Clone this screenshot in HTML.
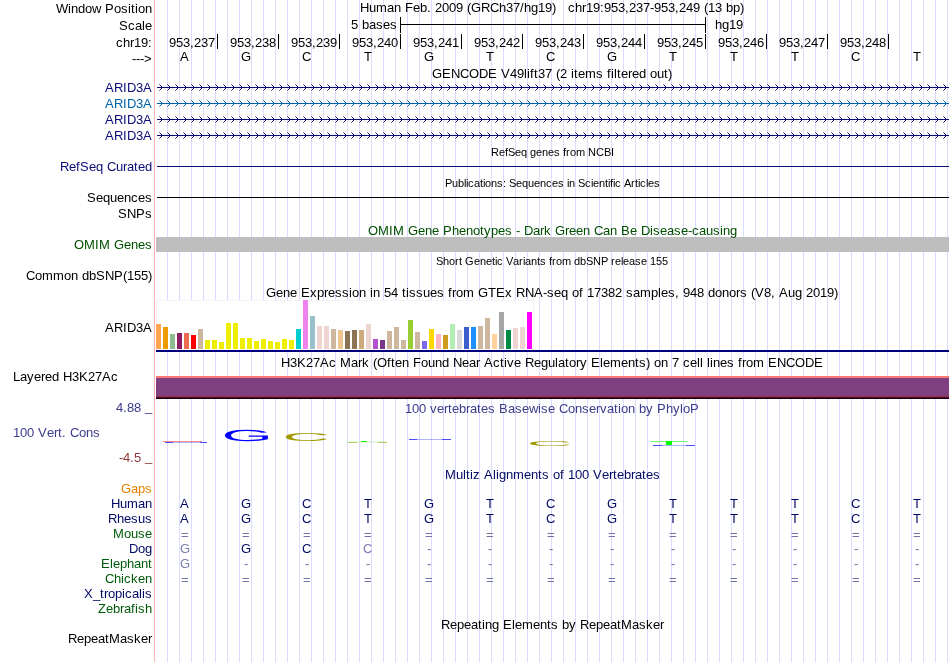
<!DOCTYPE html>
<html><head><meta charset="utf-8"><title>UCSC Genome Browser</title>
<style>html,body{margin:0;padding:0;background:#fff}svg text{white-space:pre}</style></head>
<body>
<svg width="950" height="662" viewBox="0 0 950 662" font-family="Liberation Sans, sans-serif" font-size="13" style="display:block;will-change:transform">
<defs>
<pattern id="cv1" x="0" y="0" width="8" height="7" patternUnits="userSpaceOnUse">
<rect x="7" y="0" width="1" height="1" fill="#0c0c78" opacity="0.55"/>
<rect x="0" y="1" width="1" height="1" fill="#0c0c78"/>
<rect x="1" y="2" width="1" height="1" fill="#0c0c78"/>
<rect x="2" y="3" width="1" height="1" fill="#0c0c78"/>
<rect x="1" y="4" width="1" height="1" fill="#0c0c78"/>
<rect x="0" y="5" width="1" height="1" fill="#0c0c78"/>
<rect x="7" y="6" width="1" height="1" fill="#0c0c78" opacity="0.55"/>
</pattern>
<pattern id="cv2" x="0" y="0" width="8" height="7" patternUnits="userSpaceOnUse">
<rect x="7" y="0" width="1" height="1" fill="#0064aa" opacity="0.55"/>
<rect x="0" y="1" width="1" height="1" fill="#0064aa"/>
<rect x="1" y="2" width="1" height="1" fill="#0064aa"/>
<rect x="2" y="3" width="1" height="1" fill="#0064aa"/>
<rect x="1" y="4" width="1" height="1" fill="#0064aa"/>
<rect x="0" y="5" width="1" height="1" fill="#0064aa"/>
<rect x="7" y="6" width="1" height="1" fill="#0064aa" opacity="0.55"/>
</pattern>
</defs>
<g shape-rendering="crispEdges">
<rect x="0" y="0" width="950" height="662" fill="#fff"/>
<rect x="167" y="0" width="1" height="662" fill="#dcdcff"/>
<rect x="179" y="0" width="1" height="662" fill="#dcdcff"/>
<rect x="191" y="0" width="1" height="662" fill="#dcdcff"/>
<rect x="203" y="0" width="1" height="662" fill="#dcdcff"/>
<rect x="215" y="0" width="1" height="662" fill="#dcdcff"/>
<rect x="227" y="0" width="1" height="662" fill="#dcdcff"/>
<rect x="239" y="0" width="1" height="662" fill="#dcdcff"/>
<rect x="251" y="0" width="1" height="662" fill="#dcdcff"/>
<rect x="263" y="0" width="1" height="662" fill="#dcdcff"/>
<rect x="275" y="0" width="1" height="662" fill="#dcdcff"/>
<rect x="287" y="0" width="1" height="662" fill="#dcdcff"/>
<rect x="299" y="0" width="1" height="662" fill="#dcdcff"/>
<rect x="311" y="0" width="1" height="662" fill="#dcdcff"/>
<rect x="323" y="0" width="1" height="662" fill="#dcdcff"/>
<rect x="335" y="0" width="1" height="662" fill="#dcdcff"/>
<rect x="347" y="0" width="1" height="662" fill="#dcdcff"/>
<rect x="359" y="0" width="1" height="662" fill="#dcdcff"/>
<rect x="371" y="0" width="1" height="662" fill="#dcdcff"/>
<rect x="383" y="0" width="1" height="662" fill="#dcdcff"/>
<rect x="395" y="0" width="1" height="662" fill="#dcdcff"/>
<rect x="407" y="0" width="1" height="662" fill="#dcdcff"/>
<rect x="419" y="0" width="1" height="662" fill="#dcdcff"/>
<rect x="431" y="0" width="1" height="662" fill="#dcdcff"/>
<rect x="443" y="0" width="1" height="662" fill="#dcdcff"/>
<rect x="455" y="0" width="1" height="662" fill="#dcdcff"/>
<rect x="467" y="0" width="1" height="662" fill="#dcdcff"/>
<rect x="479" y="0" width="1" height="662" fill="#dcdcff"/>
<rect x="491" y="0" width="1" height="662" fill="#dcdcff"/>
<rect x="503" y="0" width="1" height="662" fill="#dcdcff"/>
<rect x="515" y="0" width="1" height="662" fill="#dcdcff"/>
<rect x="527" y="0" width="1" height="662" fill="#dcdcff"/>
<rect x="539" y="0" width="1" height="662" fill="#dcdcff"/>
<rect x="551" y="0" width="1" height="662" fill="#dcdcff"/>
<rect x="563" y="0" width="1" height="662" fill="#dcdcff"/>
<rect x="575" y="0" width="1" height="662" fill="#dcdcff"/>
<rect x="587" y="0" width="1" height="662" fill="#dcdcff"/>
<rect x="599" y="0" width="1" height="662" fill="#dcdcff"/>
<rect x="611" y="0" width="1" height="662" fill="#dcdcff"/>
<rect x="623" y="0" width="1" height="662" fill="#dcdcff"/>
<rect x="635" y="0" width="1" height="662" fill="#dcdcff"/>
<rect x="647" y="0" width="1" height="662" fill="#dcdcff"/>
<rect x="659" y="0" width="1" height="662" fill="#dcdcff"/>
<rect x="671" y="0" width="1" height="662" fill="#dcdcff"/>
<rect x="683" y="0" width="1" height="662" fill="#dcdcff"/>
<rect x="695" y="0" width="1" height="662" fill="#dcdcff"/>
<rect x="707" y="0" width="1" height="662" fill="#dcdcff"/>
<rect x="719" y="0" width="1" height="662" fill="#dcdcff"/>
<rect x="731" y="0" width="1" height="662" fill="#dcdcff"/>
<rect x="743" y="0" width="1" height="662" fill="#dcdcff"/>
<rect x="755" y="0" width="1" height="662" fill="#dcdcff"/>
<rect x="767" y="0" width="1" height="662" fill="#dcdcff"/>
<rect x="779" y="0" width="1" height="662" fill="#dcdcff"/>
<rect x="791" y="0" width="1" height="662" fill="#dcdcff"/>
<rect x="803" y="0" width="1" height="662" fill="#dcdcff"/>
<rect x="815" y="0" width="1" height="662" fill="#dcdcff"/>
<rect x="827" y="0" width="1" height="662" fill="#dcdcff"/>
<rect x="839" y="0" width="1" height="662" fill="#dcdcff"/>
<rect x="851" y="0" width="1" height="662" fill="#dcdcff"/>
<rect x="863" y="0" width="1" height="662" fill="#dcdcff"/>
<rect x="875" y="0" width="1" height="662" fill="#dcdcff"/>
<rect x="887" y="0" width="1" height="662" fill="#dcdcff"/>
<rect x="899" y="0" width="1" height="662" fill="#dcdcff"/>
<rect x="911" y="0" width="1" height="662" fill="#dcdcff"/>
<rect x="923" y="0" width="1" height="662" fill="#dcdcff"/>
<rect x="935" y="0" width="1" height="662" fill="#dcdcff"/>
<rect x="947" y="0" width="1" height="662" fill="#dcdcff"/>
<rect x="154" y="0" width="1" height="662" fill="#ffb4b4"/>
<rect x="400" y="24" width="306" height="1" fill="#000"/>
<rect x="400" y="17" width="1" height="16" fill="#000"/>
<rect x="705" y="17" width="1" height="16" fill="#000"/>
<rect x="217" y="34" width="1" height="15" fill="#000"/>
<rect x="278" y="34" width="1" height="15" fill="#000"/>
<rect x="339" y="34" width="1" height="15" fill="#000"/>
<rect x="400" y="34" width="1" height="15" fill="#000"/>
<rect x="461" y="34" width="1" height="15" fill="#000"/>
<rect x="522" y="34" width="1" height="15" fill="#000"/>
<rect x="583" y="34" width="1" height="15" fill="#000"/>
<rect x="644" y="34" width="1" height="15" fill="#000"/>
<rect x="705" y="34" width="1" height="15" fill="#000"/>
<rect x="766" y="34" width="1" height="15" fill="#000"/>
<rect x="827" y="34" width="1" height="15" fill="#000"/>
<rect x="888" y="34" width="1" height="15" fill="#000"/>
<rect x="157" y="87" width="792" height="1" fill="#0c0c78"/>
<g transform="translate(0,84)"><rect x="159" y="0" width="788" height="7" fill="url(#cv1)"/></g>
<rect x="157" y="103" width="792" height="1" fill="#0064aa"/>
<g transform="translate(0,100)"><rect x="159" y="0" width="788" height="7" fill="url(#cv2)"/></g>
<rect x="157" y="119" width="792" height="1" fill="#0c0c78"/>
<g transform="translate(0,116)"><rect x="159" y="0" width="788" height="7" fill="url(#cv1)"/></g>
<rect x="157" y="135" width="792" height="1" fill="#0c0c78"/>
<g transform="translate(0,132)"><rect x="159" y="0" width="788" height="7" fill="url(#cv1)"/></g>
<rect x="157" y="166" width="792" height="1" fill="#0c0c78"/>
<rect x="157" y="197" width="792" height="1" fill="#000"/>
<rect x="156" y="237" width="793" height="15" fill="#bebebe"/>
<rect x="156" y="300" width="378" height="50" fill="#f4f4f4"/>
<rect x="157" y="301" width="376" height="49" fill="#fff"/>
<rect x="156" y="324" width="5" height="25" fill="#FFA54F"/>
<rect x="163" y="327" width="5" height="22" fill="#EE9A00"/>
<rect x="170" y="334" width="5" height="15" fill="#8FBC8F"/>
<rect x="177" y="333" width="5" height="16" fill="#8B1C62"/>
<rect x="184" y="333" width="5" height="16" fill="#EE6A50"/>
<rect x="191" y="335" width="5" height="14" fill="#FF0000"/>
<rect x="198" y="329" width="5" height="20" fill="#CDB79E"/>
<rect x="205" y="340" width="5" height="9" fill="#EEEE00"/>
<rect x="212" y="340" width="5" height="9" fill="#EEEE00"/>
<rect x="219" y="342" width="5" height="7" fill="#EEEE00"/>
<rect x="226" y="323" width="5" height="26" fill="#EEEE00"/>
<rect x="233" y="323" width="5" height="26" fill="#EEEE00"/>
<rect x="240" y="338" width="5" height="11" fill="#EEEE00"/>
<rect x="247" y="338" width="5" height="11" fill="#EEEE00"/>
<rect x="254" y="341" width="5" height="8" fill="#EEEE00"/>
<rect x="261" y="339" width="5" height="10" fill="#EEEE00"/>
<rect x="268" y="341" width="5" height="8" fill="#EEEE00"/>
<rect x="275" y="342" width="5" height="7" fill="#EEEE00"/>
<rect x="282" y="339" width="5" height="10" fill="#EEEE00"/>
<rect x="289" y="340" width="5" height="9" fill="#EEEE00"/>
<rect x="296" y="329" width="5" height="20" fill="#00CDCD"/>
<rect x="303" y="300" width="5" height="49" fill="#EE82EE"/>
<rect x="310" y="316" width="5" height="33" fill="#9AC0CD"/>
<rect x="317" y="326" width="5" height="23" fill="#EED5D2"/>
<rect x="324" y="326" width="5" height="23" fill="#EED5D2"/>
<rect x="331" y="329" width="5" height="20" fill="#CDB79E"/>
<rect x="338" y="330" width="5" height="19" fill="#EEC591"/>
<rect x="345" y="331" width="5" height="18" fill="#8B7355"/>
<rect x="352" y="330" width="5" height="19" fill="#8B7355"/>
<rect x="359" y="330" width="5" height="19" fill="#CDAA7D"/>
<rect x="366" y="324" width="5" height="25" fill="#EED5D2"/>
<rect x="373" y="339" width="5" height="10" fill="#B452CD"/>
<rect x="380" y="340" width="5" height="9" fill="#7A378B"/>
<rect x="387" y="331" width="5" height="18" fill="#CDB79E"/>
<rect x="394" y="327" width="5" height="22" fill="#CDB79E"/>
<rect x="401" y="340" width="5" height="9" fill="#CDB79E"/>
<rect x="408" y="320" width="5" height="29" fill="#9ACD32"/>
<rect x="415" y="332" width="5" height="17" fill="#CDB79E"/>
<rect x="422" y="341" width="5" height="8" fill="#7A67EE"/>
<rect x="429" y="329" width="5" height="20" fill="#FFD700"/>
<rect x="436" y="334" width="5" height="15" fill="#FFB6C1"/>
<rect x="443" y="335" width="5" height="14" fill="#CD9B1D"/>
<rect x="450" y="324" width="5" height="25" fill="#B4EEB4"/>
<rect x="457" y="330" width="5" height="19" fill="#D9D9D9"/>
<rect x="464" y="327" width="5" height="22" fill="#3A5FCD"/>
<rect x="471" y="327" width="5" height="22" fill="#1E90FF"/>
<rect x="478" y="326" width="5" height="23" fill="#CDB79E"/>
<rect x="485" y="318" width="5" height="31" fill="#CDB79E"/>
<rect x="492" y="334" width="5" height="15" fill="#FFD39B"/>
<rect x="499" y="312" width="5" height="37" fill="#A6A6A6"/>
<rect x="506" y="330" width="5" height="19" fill="#008B45"/>
<rect x="513" y="328" width="5" height="21" fill="#EED5D2"/>
<rect x="520" y="327" width="5" height="22" fill="#EED5D2"/>
<rect x="527" y="312" width="5" height="37" fill="#FF00FF"/>
<rect x="156" y="350" width="793" height="2" fill="#00007d"/>
<rect x="156" y="376" width="793" height="2" fill="#ff7878"/>
<rect x="156" y="378" width="793" height="18" fill="#804080"/>
<rect x="156" y="396" width="793" height="1" fill="#8c3246"/>
<rect x="156" y="397" width="793" height="1" fill="#5a0a28"/>
<rect x="156" y="398" width="793" height="1" fill="#14001e"/>
</g>
<text x="56 68 71 78 85 92 101 105 114 121 128 131 135 138 145" y="13" >Window Position</text>
<text x="119 128 135 142 145" y="30" >Scale</text>
<text x="116 123 130 134 141 148" y="47" >chr19:</text>
<text x="132 136 140 144" y="63" >---&gt;</text>
<text x="360 369 376 387 394 401 405 413 420 427 431 435 442 449 456 463 467 471 481 490 499 506 513 520 524 531 538 545 552" y="12" >Human Feb. 2009 (GRCh37/hg19)</text>
<text x="568 575 582 586 593 600 604 611 618 625 629 636 643 650 654 661 668 675 679 686 693 700 704 708 715 722 726 733 740" y="12" >chr19:953,237-953,249 (13 bp)</text>
<text x="351 358 362 369 376 383 390" y="29" >5 bases</text>
<text x="715 722 729 736" y="29" >hg19</text>
<text x="169 176 183 190 194 201 208" y="47" >953,237</text>
<text x="230 237 244 251 255 262 269" y="47" >953,238</text>
<text x="291 298 305 312 316 323 330" y="47" >953,239</text>
<text x="352 359 366 373 377 384 391" y="47" >953,240</text>
<text x="413 420 427 434 438 445 452" y="47" >953,241</text>
<text x="474 481 488 495 499 506 513" y="47" >953,242</text>
<text x="535 542 549 556 560 567 574" y="47" >953,243</text>
<text x="596 603 610 617 621 628 635" y="47" >953,244</text>
<text x="657 664 671 678 682 689 696" y="47" >953,245</text>
<text x="718 725 732 739 743 750 757" y="47" >953,246</text>
<text x="779 786 793 800 804 811 818" y="47" >953,247</text>
<text x="840 847 854 861 865 872 879" y="47" >953,248</text>
<text x="180" y="61" >A</text>
<text x="241" y="61" >G</text>
<text x="302" y="61" >C</text>
<text x="364" y="61" >T</text>
<text x="424" y="61" >G</text>
<text x="486" y="61" >T</text>
<text x="546" y="61" >C</text>
<text x="607" y="61" >G</text>
<text x="669" y="61" >T</text>
<text x="730" y="61" >T</text>
<text x="791" y="61" >T</text>
<text x="851" y="61" >C</text>
<text x="913" y="61" >T</text>
<text x="432 442 451 460 469 479 488 497 501 510 517 524 527 530 534 538 545 552 556 560 567 571 574 578 585 596 603 607 611 614 617 621 628 632 639 646 650 657 664 668" y="78" >GENCODE V49lift37 (2 items filtered out)</text>
<text x="105 114 123 127 136 143" y="92" fill="#0c0c78" >ARID3A</text>
<text x="105 114 123 127 136 143" y="108" fill="#0064aa" >ARID3A</text>
<text x="105 114 123 127 136 143" y="124" fill="#0c0c78" >ARID3A</text>
<text x="105 114 123 127 136 143" y="140" fill="#0c0c78" >ARID3A</text>
<text x="491 499 505 508 515 521 527 530 536 542 548 554 560 563 566 570 576 585 588 596 604 611" y="156" font-size="11" >RefSeq genes from NCBI</text>
<text x="60 69 76 80 89 96 103 107 116 123 127 134 138 145" y="171" fill="#0c0c78" >RefSeq Curated</text>
<text x="445 452 458 464 466 468 474 480 483 485 491 497 503 506 509 516 522 528 534 540 546 552 558 564 567 569 575 578 585 591 593 599 605 608 610 613 615 621 624 631 635 638 640 646 648 654" y="187" font-size="11" >Publications: Sequences in Scientific Articles</text>
<text x="87 96 103 110 117 124 131 138 145" y="202" >Sequences</text>
<text x="118 127 136 145" y="218" >SNPs</text>
<text x="368 378 389 393 404 408 418 425 432 439 443 452 459 466 473 480 484 491 498 505 512 516 520 524 533 540 544 551 555 565 569 576 583 590 594 603 610 617 621 630 637 641 650 653 660 667 674 681 688 692 699 706 713 720 723 730" y="235" fill="#005000" >OMIM Gene Phenotypes - Dark Green Can Be Disease-causing</text>
<text x="74 84 95 99 110 114 124 131 138 145" y="249" fill="#005000" >OMIM Genes</text>
<text x="436 443 449 455 459 462 465 474 480 486 492 495 497 503 506 513 519 523 525 531 537 540 546 549 552 556 562 571 574 580 586 593 601 608 611 615 621 623 629 635 641 647 650 656 662" y="265" font-size="11" >Short Genetic Variants from dbSNP release 155</text>
<text x="26 35 42 53 64 71 78 82 89 96 105 114 123 127 134 141 148" y="280" >Common dbSNP(155)</text>
<text x="266 276 283 290 297 301 310 317 324 328 335 342 349 352 359 366 370 373 380 384 391 398 402 406 409 416 423 430 437 444 448 452 456 463 474 478 488 496 505 512 516 525 534 543 547 554 561 568 572 579 583 587 594 601 608 615 622 626 633 640 651 658 661 668 675 679 683 690 697 704 708 715 722 729 736 740 747 751 755 764 771 775 779 788 795 802 806 813 820 827 834" y="297" >Gene Expression in 54 tissues from GTEx RNA-seq of 17382 samples, 948 donors (V8, Aug 2019)</text>
<text x="105 114 123 127 136 143" y="332" >ARID3A</text>
<text x="281 290 297 306 313 320 329 336 340 351 358 362 369 373 377 387 391 395 402 409 413 421 428 435 442 449 453 462 469 476 480 484 493 500 504 507 514 521 525 534 541 548 555 558 565 569 576 580 587 591 600 603 610 621 628 635 639 646 650 654 661 668 672 679 683 690 697 700 703 707 710 713 720 727 734 738 742 746 753 764 768 777 786 795 805 814" y="367" >H3K27Ac Mark (Often Found Near Active Regulatory Elements) on 7 cell lines from ENCODE</text>
<text x="13 20 27 34 41 45 52 59 63 72 79 88 95 102 111" y="381" >Layered H3K27Ac</text>
<text x="116 123 127 134" y="412" fill="#3c3c8c" >4.88</text>
<text x="145" y="411" fill="#3c3c8c" >_</text>
<text x="405 412 419 426 430 437 444 448 452 459 466 470 477 481 488 495 499 508 515 522 529 538 541 548 555 559 568 575 582 589 596 600 607 614 618 621 628 635 639 646 653 657 666 673 680 683 690" y="413" fill="#3c3c8c" >100 vertebrates Basewise Conservation by PhyloP</text>
<text x="13 20 27 34 38 47 54 58 62 66 70 79 86 93" y="437" fill="#3c3c8c" >100 Vert. Cons</text>
<text x="119 123 130 134" y="462" fill="#8c3c3c" >-4.5</text>
<text x="145" y="461" fill="#8c3c3c" >_</text>
<text x="445 456 463 466 470 473 480 484 493 496 499 506 513 524 531 538 542 549 553 560 564 568 575 582 589 593 602 609 613 617 624 631 635 642 646 653" y="479" fill="#000a64" >Multiz Alignments of 100 Vertebrates</text>
<text x="121 131 138 145" y="493" fill="#e68200" >Gaps</text>
<text x="111 120 127 138 145" y="508" fill="#000a64" >Human</text>
<text x="108 117 124 131 138 145" y="523" fill="#000a64" >Rhesus</text>
<text x="113 124 131 138 145" y="538" fill="#005a0a" >Mouse</text>
<text x="129 138 145" y="553" fill="#000a64" >Dog</text>
<text x="101 110 113 120 127 134 141 148" y="568" fill="#005a0a" >Elephant</text>
<text x="105 114 121 124 131 138 145" y="583" fill="#005a0a" >Chicken</text>
<text x="84 93 100 104 108 115 122 125 132 139 142 145" y="598" fill="#000a64" >X_tropicalis</text>
<text x="98 106 113 120 124 131 135 138 145" y="613" fill="#005a0a" >Zebrafish</text>
<text x="180" y="508" fill="#000a64" >A</text>
<text x="241" y="508" fill="#000a64" >G</text>
<text x="302" y="508" fill="#000a64" >C</text>
<text x="364" y="508" fill="#000a64" >T</text>
<text x="424" y="508" fill="#000a64" >G</text>
<text x="486" y="508" fill="#000a64" >T</text>
<text x="546" y="508" fill="#000a64" >C</text>
<text x="607" y="508" fill="#000a64" >G</text>
<text x="669" y="508" fill="#000a64" >T</text>
<text x="730" y="508" fill="#000a64" >T</text>
<text x="791" y="508" fill="#000a64" >T</text>
<text x="851" y="508" fill="#000a64" >C</text>
<text x="913" y="508" fill="#000a64" >T</text>
<text x="180" y="523" fill="#000a64" >A</text>
<text x="241" y="523" fill="#000a64" >G</text>
<text x="302" y="523" fill="#000a64" >C</text>
<text x="364" y="523" fill="#000a64" >T</text>
<text x="424" y="523" fill="#000a64" >G</text>
<text x="486" y="523" fill="#000a64" >T</text>
<text x="546" y="523" fill="#000a64" >C</text>
<text x="607" y="523" fill="#000a64" >G</text>
<text x="669" y="523" fill="#000a64" >T</text>
<text x="730" y="523" fill="#000a64" >T</text>
<text x="791" y="523" fill="#000a64" >T</text>
<text x="851" y="523" fill="#000a64" >C</text>
<text x="913" y="523" fill="#000a64" >T</text>
<text x="181" y="539" fill="#7272a6" >=</text>
<text x="242" y="539" fill="#7272a6" >=</text>
<text x="303" y="539" fill="#7272a6" >=</text>
<text x="364" y="539" fill="#7272a6" >=</text>
<text x="425" y="539" fill="#7272a6" >=</text>
<text x="486" y="539" fill="#7272a6" >=</text>
<text x="547" y="539" fill="#7272a6" >=</text>
<text x="608" y="539" fill="#7272a6" >=</text>
<text x="669" y="539" fill="#7272a6" >=</text>
<text x="730" y="539" fill="#7272a6" >=</text>
<text x="791" y="539" fill="#7272a6" >=</text>
<text x="852" y="539" fill="#7272a6" >=</text>
<text x="913" y="539" fill="#7272a6" >=</text>
<text x="180" y="553" fill="#7c7cae" >G</text>
<text x="241" y="553" fill="#000a64" >G</text>
<text x="302" y="553" fill="#000a64" >C</text>
<text x="363" y="553" fill="#7c7cae" >C</text>
<text x="427" y="553" fill="#7272a6" >-</text>
<text x="488" y="553" fill="#7272a6" >-</text>
<text x="549" y="553" fill="#7272a6" >-</text>
<text x="610" y="553" fill="#7272a6" >-</text>
<text x="671" y="553" fill="#7272a6" >-</text>
<text x="732" y="553" fill="#7272a6" >-</text>
<text x="793" y="553" fill="#7272a6" >-</text>
<text x="854" y="553" fill="#7272a6" >-</text>
<text x="915" y="553" fill="#7272a6" >-</text>
<text x="180" y="568" fill="#7c7cae" >G</text>
<text x="244" y="568" fill="#7272a6" >-</text>
<text x="305" y="568" fill="#7272a6" >-</text>
<text x="366" y="568" fill="#7272a6" >-</text>
<text x="427" y="568" fill="#7272a6" >-</text>
<text x="488" y="568" fill="#7272a6" >-</text>
<text x="549" y="568" fill="#7272a6" >-</text>
<text x="610" y="568" fill="#7272a6" >-</text>
<text x="671" y="568" fill="#7272a6" >-</text>
<text x="732" y="568" fill="#7272a6" >-</text>
<text x="793" y="568" fill="#7272a6" >-</text>
<text x="854" y="568" fill="#7272a6" >-</text>
<text x="915" y="568" fill="#7272a6" >-</text>
<text x="181" y="584" fill="#7272a6" >=</text>
<text x="242" y="584" fill="#7272a6" >=</text>
<text x="303" y="584" fill="#7272a6" >=</text>
<text x="364" y="584" fill="#7272a6" >=</text>
<text x="425" y="584" fill="#7272a6" >=</text>
<text x="486" y="584" fill="#7272a6" >=</text>
<text x="547" y="584" fill="#7272a6" >=</text>
<text x="608" y="584" fill="#7272a6" >=</text>
<text x="669" y="584" fill="#7272a6" >=</text>
<text x="730" y="584" fill="#7272a6" >=</text>
<text x="791" y="584" fill="#7272a6" >=</text>
<text x="852" y="584" fill="#7272a6" >=</text>
<text x="913" y="584" fill="#7272a6" >=</text>
<text x="441 450 457 464 471 478 482 485 492 499 503 512 515 522 533 540 547 551 558 562 569 576 580 589 596 603 610 617 621 632 639 646 653 660" y="629" >Repeating Elements by RepeatMasker</text>
<text x="68 77 84 91 98 105 109 120 127 134 141 148" y="643" >RepeatMasker</text>
<g shape-rendering="crispEdges">
<rect x="163" y="441" width="39" height="1" fill="#ff2020" opacity="0.5"/>
</g>
<g shape-rendering="crispEdges">
<rect x="165" y="442" width="8" height="1" fill="#0000ff" opacity="0.7"/>
<rect x="173" y="442" width="27" height="1" fill="#0000ff" opacity="0.3"/>
<rect x="200" y="442" width="7" height="1" fill="#0000ff" opacity="0.7"/>
</g>
<text transform="translate(221.472,440.996) scale(0.03231,0.00769)" font-size="2048" text-rendering="geometricPrecision" fill="#0000ff">G</text>
<text transform="translate(282.380,441.038) scale(0.03192,0.00562)" font-size="2048" fill="#a09a00">C</text>
<g shape-rendering="crispEdges">
<rect x="345" y="441" width="42" height="1" fill="#00ff00" opacity="0.12"/>
</g>
<rect x="361" y="441" width="6" height="1" fill="#00ff00" shape-rendering="crispEdges"/>
<g shape-rendering="crispEdges">
<rect x="348" y="442" width="9" height="1" fill="#a09600" opacity="0.6"/>
<rect x="357" y="442" width="21" height="1" fill="#a09600" opacity="0.15"/>
<rect x="378" y="442" width="9" height="1" fill="#a09600" opacity="0.6"/>
</g>
<g shape-rendering="crispEdges">
<rect x="409" y="439" width="8" height="1" fill="#0000ff" opacity="0.7"/>
<rect x="417" y="439" width="25" height="1" fill="#0000ff" opacity="0.3"/>
<rect x="442" y="439" width="9" height="1" fill="#0000ff" opacity="0.7"/>
</g>
<text transform="translate(526.661,445.928) scale(0.03115,0.00359)" font-size="2048" fill="#a09a00">C</text>
<text transform="translate(648.710,445.000) scale(0.03238,0.00291)" font-size="2048" fill="#00ff00">T</text>
<g shape-rendering="crispEdges">
<rect x="653" y="445" width="9" height="1" fill="#0000ff" opacity="0.7"/>
<rect x="662" y="445" width="24" height="1" fill="#0000ff" opacity="0.3"/>
<rect x="686" y="445" width="9" height="1" fill="#0000ff" opacity="0.7"/>
</g>
</svg>
</body></html>
